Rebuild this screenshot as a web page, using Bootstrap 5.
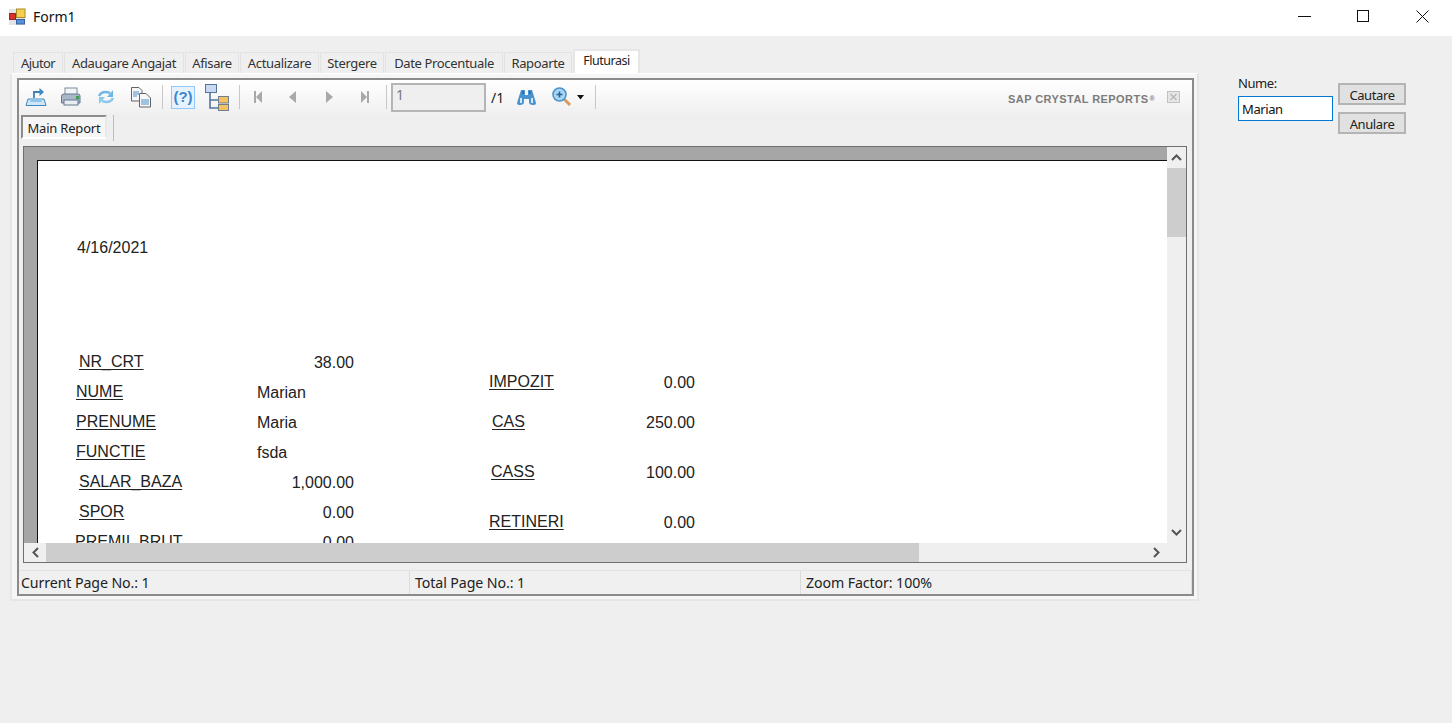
<!DOCTYPE html>
<html lang="ro">
<head>
  <meta charset="UTF-8">
  <title>Form1</title>
  <link href="https://cdn.jsdelivr.net/npm/bootstrap@5.3.0/dist/css/bootstrap.min.css" rel="stylesheet">
  <style>
    html, body { height: 100%; }
    body { background: #efefef; font-family: "Noto Sans", "Open Sans", sans-serif; font-size: 14px; color: #222; overflow: hidden; }

    .title-bar { height: 36px; background: #fff; padding-bottom: 3px; }
    .title-text { margin-left: 7px; font-size: 14px; color: #111; }
    .win-btn { width: 59px; height: 33px; }

    .work-area { height: 687px; }
    .tab-col { width: 1189px; margin-left: 10px; padding-top: 13px; }
    .right-col { margin-left: 39px; padding-top: 38px; width: 170px; }

    .tab-row { height: 24px; padding-left: 3px; gap: 1px; }
    .tab-item { height: 21px; margin-top: 3px; background: #efefef; border: 1px solid #e2e2e2; border-bottom: 0; font-size: 13px; letter-spacing: -.35px; color: #333; text-align: center; line-height: 20px; }
    .tab-item.is-on { height: 24px; margin-top: 0; background: #fff; border: 2px solid #e6e6e6; border-bottom: 0; margin-left: 0; color: #222; line-height: 19px; font-size: 12.5px; letter-spacing: -.5px; }
    .t1 { width: 50px; letter-spacing: -.6px; } .t2 { width: 120px; } .t3 { width: 54px; } .t4 { width: 79px; }
    .t5 { width: 64px; } .t6 { width: 118px; } .t7 { width: 68px; } .t8 { width: 67px; }

    .tab-body { height: 528px; background: #f6f6f6; border: 2px solid #e6e6e6; border-top: 1px solid #fff; padding: 4px 3px 4px 5px; }
    .viewer { height: 518px; border: 2px solid #8b8b8b; background: #efefef; }

    .tool-row { height: 34px; background: linear-gradient(#fff, #f0f0f0); }
    .slot { height: 32px; flex: none; }
    .s33 { width: 34px; } .s35 { width: 35px; } .s36 { width: 36px; }
    .tb-sep { width: 1px; height: 24px; background: #c8c8c8; flex: none; }
    .sep-first { margin-left: 3px; margin-right: 8px; }
    .sep-last { margin-left: 10px; }
    .help-btn { width: 24px; height: 23px; background: #e6f3ff; border: 1px solid #90c9fb; color: #3f86cc; font-weight: 700; font-size: 15px; line-height: 20px; text-align: center; font-family: "Liberation Sans", sans-serif; margin-right: 9px; flex: none; }
    .page-box { width: 95px; height: 29px; border: 2px solid #b5b5b5; background: #efefef; color: #777; font-size: 14px; line-height: 19px; padding-left: 3px; margin-left: 4px; flex: none; }
    .page-total { margin-left: 5px; font-size: 14px; width: 26px; flex: none; }
    .sap-text { font-family: "Liberation Sans", sans-serif; font-weight: 700; font-size: 11px; color: #7c7c7c; letter-spacing: .43px; white-space: nowrap; margin-top: 4px; }
    .sap-reg { font-size: 7px; position: relative; top: -2px; margin-left: 1px; }
    .sap-close { width: 13px; height: 12px; margin: 0 12px 0 12px; flex: none; }

    .report-tabs { height: 32px; padding: 1px 0 0 2px; }
    .report-tab { width: 86px; height: 24px; background: #f6f6f6; border: 2px solid #8d8d8d; border-right-color: #e9e9e9; border-bottom-color: #fff; font-size: 13px; letter-spacing: -.2px; line-height: 22px; text-align: center; color: #222; }
    .report-tab-sep { width: 1px; height: 26px; background: #bdbdbd; margin-left: 6px; }

    .report-pane { height: 417px; margin: 0 5px 0 4px; border: 1px solid #6f6f6f; display: grid; grid-template-columns: 1143px 19px; grid-template-rows: 396px 19px; background: #efefef; }
    .report-view { position: relative; overflow: hidden; background: #a6a6a6; }
    .report-page { position: absolute; left: 13px; top: 13px; width: 1200px; height: 800px; background: #fff; border-left: 1px solid #111; border-top: 1px solid #111; }
    .rf { position: absolute; font-family: "Liberation Sans", Arial, sans-serif; font-size: 16px; line-height: 18px; color: #222; white-space: nowrap; }
    .rf.lbl { text-decoration: underline; text-underline-offset: 2px; text-decoration-thickness: 1px; }

    .sb-v, .sb-h { background: #efefef; position: relative; }
    .sb-v { display: flex; flex-direction: column; align-items: center; }
    .sb-end { width: 19px; height: 21px; flex: none; }
    .sb-thumb-v { width: 19px; height: 69px; background: #cdcdcd; flex: none; }
    .sb-h { display: flex; align-items: center; }
    .sb-end-h { width: 22px; height: 19px; flex: none; }
    .sb-thumb-h { width: 873px; height: 19px; background: #cdcdcd; flex: none; }

    .status-row { height: 24px; margin-top: 7px; border-top: 1px solid #e2e2e2; background: #f0f0f0; font-size: 14.2px; color: #222; letter-spacing: -.1px; }
    .st1 { width: 391px; padding-left: 2px; } .st2 { width: 391px; padding-left: 5px; } .st3 { flex: 1; padding-left: 5px; }
    .st-cell { height: 23px; line-height: 23px; border-right: 1px solid #dcdcdc; }

    .name-label { font-size: 13px; letter-spacing: -.4px; line-height: 18px; color: #222; }
    .name-input { width: 95px; height: 25px; margin-top: 4px; border: 1px solid #0078d7; border-radius: 0; background: #fff; font-size: 13px; letter-spacing: -.4px; padding: 0 3px; color: #111; }
    .name-input:focus { outline: 0; }
    .btn-col { padding-top: 1px; margin-left: 1px; }
    .form-btn { width: 68px; height: 22px; padding: 2px 0 0; border: 2px solid #b4b4b4; border-radius: 0; background: #e1e1e1; font-size: 13px; letter-spacing: -.4px; line-height: 16px; color: #222; }
    .form-btn:hover { background: #e1e1e1; border-color: #b4b4b4; color: #222; }
    .form-btn + .form-btn { margin-top: 7px; }
  </style>
</head>
<body>
  <div class="title-bar d-flex align-items-center">
    <svg class="ms-2" width="18" height="18" viewBox="0 0 18 18">
      <rect x="1" y="1" width="16" height="16" fill="#e4e4e4"/>
      <rect x="8.5" y="1" width="8.5" height="8.5" fill="#f7cf4e" stroke="#a98a2a"/>
      <rect x="1.5" y="5.5" width="6" height="6" fill="#d8322a" stroke="#8d2a25"/>
      <rect x="8.5" y="11.5" width="8" height="4.5" fill="#5b8edb" stroke="#35609f"/>
    </svg>
    <span class="title-text">Form1</span>
    <div class="ms-auto d-flex">
      <div class="win-btn d-flex align-items-center justify-content-center">
        <svg width="13" height="13" viewBox="0 0 13 13"><path d="M0 6.5H13" stroke="#111" fill="none"/></svg>
      </div>
      <div class="win-btn d-flex align-items-center justify-content-center">
        <svg width="13" height="13" viewBox="0 0 13 13"><rect x=".5" y=".5" width="11" height="11" stroke="#111" fill="none"/></svg>
      </div>
      <div class="win-btn d-flex align-items-center justify-content-center">
        <svg width="13" height="13" viewBox="0 0 13 13"><path d="M.5 .5L12.5 12.5M12.5 .5L.5 12.5" stroke="#111" fill="none"/></svg>
      </div>
    </div>
  </div>

  <div class="work-area d-flex">
    <div class="tab-col flex-none">
      <div class="tab-row d-flex">
        <div class="tab-item t1">Ajutor</div>
        <div class="tab-item t2">Adaugare Angajat</div>
        <div class="tab-item t3">Afisare</div>
        <div class="tab-item t4">Actualizare</div>
        <div class="tab-item t5">Stergere</div>
        <div class="tab-item t6">Date Procentuale</div>
        <div class="tab-item t7">Rapoarte</div>
        <div class="tab-item t8 is-on">Fluturasi</div>
      </div>
      <div class="tab-body">
        <div class="viewer d-flex flex-column">
          <div class="tool-row d-flex align-items-center">
            <div class="slot s33 d-flex align-items-center justify-content-center">
              <svg width="22" height="20" viewBox="0 0 22 20">
                <path d="M1 18.5L3 12H19L21 18.5Z" fill="#cfe6f7" stroke="#3f88c0"/>
                <path d="M6 12H16L17 15H5Z" fill="#8fc3e8"/>
                <path d="M9 11V5H15" fill="none" stroke="#3f7fb5" stroke-width="1.8"/>
                <path d="M14.5 1L19 5L14.5 9Z" fill="#3f88c0"/>
              </svg>
            </div>
            <div class="slot s35 d-flex align-items-center justify-content-center">
              <svg width="21" height="20" viewBox="0 0 21 20">
                <rect x="5" y="1" width="12" height="7" fill="#f3f6f9" stroke="#7b8b9c"/>
                <path d="M1.5 9Q1.5 7 4 7H18Q20 7 20 9V16H1.5Z" fill="#a9b8c8" stroke="#64788f"/>
                <rect x="4" y="13" width="14" height="5" fill="#e8edf2" stroke="#64788f"/>
                <rect x="16" y="9" width="3" height="3" fill="#3f9c55"/>
              </svg>
            </div>
            <div class="slot s35 d-flex align-items-center justify-content-center">
              <svg width="18" height="18" viewBox="0 0 18 18" fill="none">
                <path d="M2 8Q5 2 13 5" stroke="#6fb7e4" stroke-width="2.6"/>
                <path d="M16 2V9H10Z" fill="#6fb7e4"/>
                <path d="M16 10Q13 16 5 13" stroke="#8cc8ec" stroke-width="2.6"/>
                <path d="M2 16V9H8Z" fill="#8cc8ec"/>
              </svg>
            </div>
            <div class="slot s36 d-flex align-items-center justify-content-center">
              <svg width="22" height="22" viewBox="0 0 22 22">
                <path d="M1.5 1.5H9L12 4.5V15H1.5Z" fill="#f7f7f7" stroke="#60656b"/>
                <path d="M3 6H9M3 8H9M3 10H7" stroke="#4b8cc8"/>
                <path d="M9.5 7.5H16L20.5 12V21H9.5Z" fill="#f7f7f7" stroke="#60656b"/>
                <path d="M11 14H19M11 16H19M11 18H19" stroke="#4b8cc8"/>
              </svg>
            </div>
            <div class="tb-sep sep-first"></div>
            <div class="help-btn">(?)</div>
            <div class="slot s35 d-flex align-items-center">
              <svg width="26" height="28" viewBox="0 0 26 28">
                <rect x="1.5" y="1.5" width="11" height="8" fill="#c9d9f0" stroke="#53759d"/>
                <path d="M6 10V25H14M6 17H14" fill="none" stroke="#53759d" stroke-width="1.6"/>
                <rect x="14.5" y="13.5" width="10" height="6.5" fill="#f5c25f" stroke="#6f7f92"/>
                <rect x="14.5" y="21.5" width="10" height="6" fill="#f5c25f" stroke="#6f7f92"/>
              </svg>
            </div>
            <div class="tb-sep"></div>
            <div class="slot s35 d-flex align-items-center justify-content-center">
              <svg width="10" height="12" viewBox="0 0 10 12" fill="#a9a9a9"><rect width="2" height="12" x="1"/><path d="M9 0V12L3 6Z"/></svg>
            </div>
            <div class="slot s36 d-flex align-items-center justify-content-center">
              <svg width="10" height="12" viewBox="0 0 10 12" fill="#a9a9a9"><path d="M8 0V12L1 6Z"/></svg>
            </div>
            <div class="slot s36 d-flex align-items-center justify-content-center">
              <svg width="10" height="12" viewBox="0 0 10 12" fill="#a9a9a9"><path d="M2 0V12L9 6Z"/></svg>
            </div>
            <div class="slot s35 me-1 d-flex align-items-center justify-content-center">
              <svg width="10" height="12" viewBox="0 0 10 12" fill="#a9a9a9"><rect width="2" height="12" x="7"/><path d="M1 0V12L7 6Z"/></svg>
            </div>
            <div class="tb-sep"></div>
            <div class="page-box">1</div>
            <div class="page-total">/1</div>
            <div class="slot d-flex align-items-center">
              <svg width="19" height="17" viewBox="0 0 19 17">
                <path d="M4 1H8V6H11V1H15L19 14Q19 16 16 16Q12 16 12 13V10H7V13Q7 16 3 16Q0 16 0 14Z" fill="#4a93cf"/>
                <path d="M3 9H5V14H3ZM14 9H16V14H14Z" fill="#cfe7f8"/>
                <path d="M5 2H7V5H5ZM12 2H14V5H12Z" fill="#2d6ea8"/>
              </svg>
            </div>
            <div class="slot d-flex align-items-center ms-3">
              <svg width="20" height="21" viewBox="0 0 20 21">
                <path d="M12 12L18 18" stroke="#d99a5b" stroke-width="3"/>
                <circle cx="7.5" cy="7.5" r="6.5" fill="#a9d6f3" stroke="#4d94c9" stroke-width="1.6"/>
                <path d="M4.5 7.5H10.5M7.5 4.5V10.5" stroke="#23649c" stroke-width="1.6"/>
              </svg>
            </div>
            <div class="slot d-flex align-items-center ms-1">
              <svg width="9" height="5" viewBox="0 0 9 5"><path d="M1 0H8L4.5 4.5Z" fill="#111"/></svg>
            </div>
            <div class="tb-sep sep-last"></div>
            <div class="ms-auto sap-text">SAP CRYSTAL REPORTS<span class="sap-reg">®</span></div>
            <svg class="sap-close" viewBox="0 0 13 12">
              <rect x=".5" y=".5" width="12" height="11" fill="#e6e6e6" stroke="#c2c2c2"/>
              <path d="M3.5 3L9.5 9M9.5 3L3.5 9" stroke="#b5b5b5" stroke-width="1.2"/>
            </svg>
          </div>

          <div class="report-tabs d-flex">
            <div class="report-tab">Main Report</div>
            <div class="report-tab-sep"></div>
          </div>

          <div class="report-pane">
            <div class="report-view">
              <div class="report-page" id="reportPage"></div>
            </div>
            <div class="sb-v">
              <div class="sb-end d-flex align-items-center justify-content-center">
                <svg width="11" height="7" viewBox="0 0 11 7"><path d="M1 6L5.5 1.5L10 6" fill="none" stroke="#555" stroke-width="2"/></svg>
              </div>
              <div class="sb-thumb-v"></div>
              <div class="sb-end mt-auto d-flex align-items-center justify-content-center">
                <svg width="11" height="7" viewBox="0 0 11 7"><path d="M1 1L5.5 5.5L10 1" fill="none" stroke="#555" stroke-width="2"/></svg>
              </div>
            </div>
            <div class="sb-h">
              <div class="sb-end-h d-flex align-items-center justify-content-center">
                <svg width="7" height="11" viewBox="0 0 7 11"><path d="M6 1L1.5 5.5L6 10" fill="none" stroke="#555" stroke-width="2"/></svg>
              </div>
              <div class="sb-thumb-h"></div>
              <div class="sb-end-h ms-auto d-flex align-items-center justify-content-center">
                <svg width="7" height="11" viewBox="0 0 7 11"><path d="M1 1L5.5 5.5L1 10" fill="none" stroke="#555" stroke-width="2"/></svg>
              </div>
            </div>
            <div></div>
          </div>

          <div class="status-row d-flex">
            <div class="st-cell st1">Current Page No.: 1</div>
            <div class="st-cell st2">Total Page No.: 1</div>
            <div class="st-cell st3">Zoom Factor: 100%</div>
          </div>
        </div>
      </div>
    </div>

    <div class="right-col d-flex gap-1">
      <div>
        <div class="name-label">Nume:</div>
        <input class="name-input form-control" type="text" value="Marian">
      </div>
      <div class="btn-col d-flex flex-column">
        <button class="btn form-btn mt-2" type="button">Cautare</button>
        <button class="btn form-btn" type="button">Anulare</button>
      </div>
    </div>
  </div>

  <script>
    // campurile raportului, coordonate fata de pagina din fereastra
    const campuri = [
      { t: '4/16/2021', x: 77, y: 248 },
      { t: 'NR_CRT', x: 79, y: 362, lbl: 1 },
      { t: '38.00', r: 355, y: 363 },
      { t: 'NUME', x: 76, y: 392, lbl: 1 },
      { t: 'Marian', x: 257, y: 393 },
      { t: 'PRENUME', x: 76, y: 422, lbl: 1 },
      { t: 'Maria', x: 257, y: 423 },
      { t: 'FUNCTIE', x: 76, y: 452, lbl: 1 },
      { t: 'fsda', x: 257, y: 453 },
      { t: 'SALAR_BAZA', x: 79, y: 482, lbl: 1 },
      { t: '1,000.00', r: 355, y: 483 },
      { t: 'SPOR', x: 79, y: 512, lbl: 1 },
      { t: '0.00', r: 355, y: 513 },
      { t: 'PREMII_BRUT', x: 75, y: 542, lbl: 1 },
      { t: '0.00', r: 355, y: 543 },
      { t: 'IMPOZIT', x: 489, y: 382, lbl: 1 },
      { t: '0.00', r: 696, y: 383 },
      { t: 'CAS', x: 492, y: 422, lbl: 1 },
      { t: '250.00', r: 696, y: 423 },
      { t: 'CASS', x: 491, y: 472, lbl: 1 },
      { t: '100.00', r: 696, y: 473 },
      { t: 'RETINERI', x: 489, y: 522, lbl: 1 },
      { t: '0.00', r: 696, y: 523 }
    ];
    const pagina = document.getElementById('reportPage');
    const PAGE_X = 38, PAGE_Y = 161;
    campuri.forEach(function (c) {
      const el = document.createElement('div');
      el.className = c.lbl ? 'rf lbl' : 'rf';
      el.textContent = c.t;
      el.style.top = (c.y - 9 - PAGE_Y) + 'px';
      if (c.r) {
        el.style.right = (1200 - (c.r - PAGE_X)) + 'px';
      } else {
        el.style.left = (c.x - PAGE_X) + 'px';
      }
      pagina.appendChild(el);
    });
  </script>
  <script src="https://cdn.jsdelivr.net/npm/bootstrap@5.3.0/dist/js/bootstrap.bundle.min.js"></script>
</body>
</html>
